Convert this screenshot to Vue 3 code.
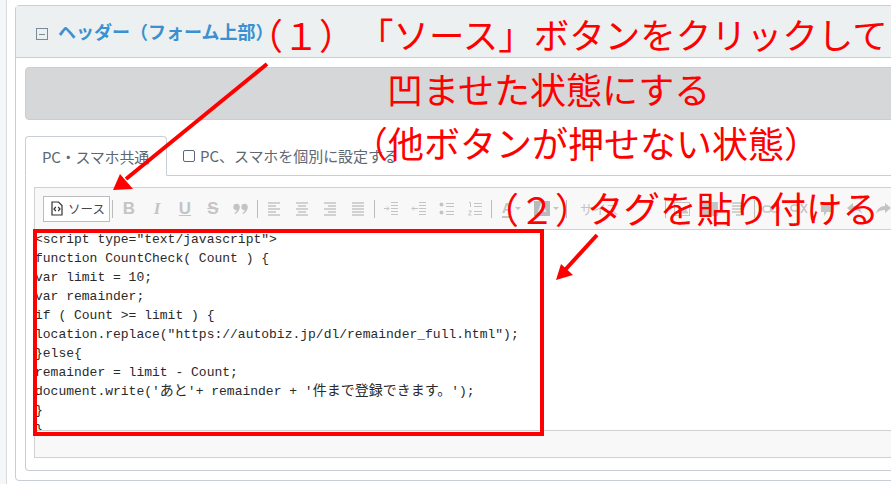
<script setup>
const codeLines = [
  '<script type="text/javascript">',
  'function CountCheck( Count ) {',
  'var limit = 10;',
  'var remainder;',
  'if ( Count >= limit ) {',
  'location.replace("https://autobiz.jp/dl/remainder_full.html");',
  '}else{',
  'remainder = limit - Count;',
  "document.write('あと'+ remainder + '件まで登録できます。');",
  '}',
  '}'
].map((l) => l.split(/([^\x00-\x7f]+)/).map((text) => ({ text, jp: /[^\x00-\x7f]/.test(text) })))
const lines = (a) => a.map(([x, y, w]) => `M${x} ${y}h${w}`).join('')
const alignLeft = lines([[2, 3, 12], [2, 6, 8], [2, 9, 12], [2, 12, 8], [2, 15, 12]])
const alignCenter = lines([[2, 3, 12], [4, 6, 8], [2, 9, 12], [4, 12, 8], [2, 15, 12]])
const alignRight = lines([[2, 3, 12], [6, 6, 8], [2, 9, 12], [6, 12, 8], [2, 15, 12]])
const justify = lines([[2, 3, 12], [2, 6, 12], [2, 9, 12], [2, 12, 12], [2, 15, 12]])
const groupA = [alignLeft, alignCenter, alignRight, justify]
</script>

<template>
  <div class="page">
    <div class="strip"></div>
    <div class="main">
      <section class="card">
        <header class="card-head">
          <span class="collapse"></span>
          <h2 class="title">ヘッダー（フォーム上部）</h2>
        </header>
        <div class="card-body">
          <div class="grey-bar"></div>
          <div class="tabs">
            <div class="tab active">PC・スマホ共通</div>
            <label class="tab plain"><span class="check"></span>PC、スマホを個別に設定する</label>
          </div>
          <div class="tab-pane">
            <div class="editor">
              <div class="toolbar">
                <button class="source">
                  <svg width="12" height="15" viewBox="0 0 12 15" fill="none" stroke="#333" stroke-width="1.2">
                    <path d="M1 1h6.500L11 4.500V14H1z" />
                    <path d="M4.800 6L3 8l1.800 2M7.200 6L9 8l-1.800 2" />
                  </svg>
                  <span>ソース</span>
                </button>
                <i class="sep"></i>
                <span class="btn txt b">B</span>
                <span class="btn txt it">I</span>
                <span class="btn txt u">U</span>
                <span class="btn txt s">S</span>
                <span class="btn">
                  <svg width="16" height="12" viewBox="0 0 16 12" fill="#c4c4c4">
                    <circle cx="3.500" cy="4" r="3.200" /><path d="M6.600 4c0 3.500-2 6-4.600 7l-.6-1c1.500-.8 2.700-2.500 2.700-4z" />
                    <circle cx="11.500" cy="4" r="3.200" /><path d="M14.600 4c0 3.500-2 6-4.600 7l-.6-1c1.500-.8 2.700-2.500 2.700-4z" />
                  </svg>
                </span>
                <i class="sep"></i>
                <span class="btn" v-for="(d, i) in groupA" :key="i">
                  <svg width="16" height="18" viewBox="0 0 16 18" fill="none" stroke="#c4c4c4" stroke-width="1.400"><path :d="d" /></svg>
                </span>
                <i class="sep"></i>
                <span class="btn">
                  <svg width="16" height="16" viewBox="0 0 16 16" fill="none" stroke="#c4c4c4"><path d="M8 1.500h7M8 4.500h7M8 7.500h7M8 10.500h7M8 13.500h7M1 7.500h5M4 5.500l2 2-2 2" /></svg>
                </span>
                <span class="btn">
                  <svg width="16" height="16" viewBox="0 0 16 16" fill="none" stroke="#c4c4c4"><path d="M8 1.500h7M8 4.500h7M8 7.500h7M8 10.500h7M8 13.500h7M1 7.500h6M3 5.500l-2 2 2 2" /></svg>
                </span>
                <span class="btn">
                  <svg width="16" height="16" viewBox="0 0 16 16" fill="#c4c4c4" stroke="#c4c4c4"><circle cx="2.500" cy="3.500" r="2" stroke="none" /><circle cx="2.500" cy="11.500" r="2" stroke="none" /><path d="M7 2.500h8M7 5.500h8M7 10.500h8M7 13.500h8" fill="none" /></svg>
                </span>
                <span class="btn">
                  <svg width="16" height="16" viewBox="0 0 16 16" fill="none" stroke="#c4c4c4"><path d="M7 2.500h8M7 5.500h8M7 10.500h8M7 13.500h8M2 1.500h1.500V6M1.500 10h3l-3 4h3" /></svg>
                </span>
                <i class="sep"></i>
                <span class="btn wide">
                  <span class="color-a">A</span><i class="caret"></i>
                </span>
                <span class="btn wide">
                  <span class="color-box">A</span><i class="caret"></i>
                </span>
                <i class="sep"></i>
                <span class="size">サイズ</span>
                <i class="sep"></i>
                <span class="btn">
                  <svg width="18" height="16" viewBox="0 0 18 16" fill="none" stroke="#c4c4c4"><rect x="1.500" y="1.500" width="15" height="13" /><path d="M3 12l4-5 3 3 2-2 3 4z" fill="#c4c4c4" /></svg>
                </span>
                <span class="btn">
                  <svg width="18" height="16" viewBox="0 0 18 16" fill="#c4c4c4"><rect x="1" y="1" width="16" height="14" /></svg>
                </span>
                <span class="btn">
                  <svg width="16" height="18" viewBox="0 0 16 18" fill="none" stroke="#c4c4c4" stroke-width="1.300"><path d="M2 3h12M2 6h12M2 9h12M2 12h12M6 15h8" /></svg>
                </span>
                <i class="sep"></i>
                <span class="btn">
                  <svg width="18" height="12" viewBox="0 0 18 12" fill="none" stroke="#c4c4c4" stroke-width="1.500"><rect x="1" y="3" width="8" height="6" rx="3" /><rect x="9" y="3" width="8" height="6" rx="3" /></svg>
                </span>
                <span class="btn">
                  <svg width="18" height="14" viewBox="0 0 18 14" fill="none" stroke="#c4c4c4" stroke-width="1.500"><rect x="1" y="3" width="8" height="6" rx="3" /><path d="M11 2l6 9M17 2l-6 9" /></svg>
                </span>
                <span class="btn">
                  <svg width="14" height="16" viewBox="0 0 14 16" fill="#c4c4c4"><path d="M1 1h12v10H7l-3 4v-4H1z" /></svg>
                </span>
                <span class="btn">
                  <svg width="18" height="14" viewBox="0 0 18 14" fill="#c4c4c4"><path d="M7 1L1 6l6 5V8c4 0 7 1 9 4-1-5-4-8-9-8z" /></svg>
                </span>
                <span class="btn">
                  <svg width="18" height="14" viewBox="0 0 18 14" fill="#c4c4c4"><path d="M11 1l6 5-6 5V8c-4 0-7 1-9 4 1-5 4-8 9-8z" /></svg>
                </span>
              </div>
              <div class="code">
                <div class="code-line" v-for="(l, i) in codeLines" :key="i"><span v-for="(p, j) in l" :key="j" :class="{ jp: p.jp }">{{ p.text }}</span></div>
              </div>
              <div class="editor-foot"></div>
            </div>
          </div>
        </div>
      </section>
    </div>

    <svg class="marks" width="891" height="484" viewBox="0 0 891 484" fill="none">
      <rect x="35" y="231" width="507" height="203" stroke="#f00" stroke-width="4" />
      <path d="M267 64L126 179" stroke="#f00" stroke-width="4" />
      <path d="M113 190l7-16 13 15z" fill="#f00" />
      <path d="M597 235l-32 35" stroke="#f00" stroke-width="4" />
      <path d="M556 280l5-16 12 11z" fill="#f00" />
    </svg>
    <div class="note n1">（１）</div>
    <div class="note n2">「ソース」ボタンをクリックして</div>
    <div class="note n3">凹ませた状態にする</div>
    <div class="note n4">（他ボタンが押せない状態）</div>
    <div class="note n5a">（２）</div>
    <div class="note n5b">タグを貼り付ける</div>
  </div>
</template>

<style scoped>
.page {
  position: relative;
  display: flex;
  width: 891px;
  height: 484px;
  overflow: hidden;
  background: #fff;
  font-family: "Noto Sans CJK JP", "Noto Sans", sans-serif;
}
.strip {
  flex: none;
  width: 6px;
  background: #f4f6f8;
  border-right: 1px solid #d5dbdf;
}
.main {
  flex: none;
  width: 1000px;
  padding: 5px 0 0 8px;
  box-sizing: border-box;
}
.card {
  height: 476px;
  box-sizing: border-box;
  border: 1px solid #c8ced3;
  border-radius: 4px;
  display: flex;
  flex-direction: column;
}
.card-head {
  flex: none;
  height: 52px;
  box-sizing: border-box;
  display: flex;
  align-items: center;
  gap: 10px;
  padding-left: 20px;
  background: #ecf0f1;
  border-bottom: 1px solid #c8ced3;
}
.collapse {
  position: relative;
  width: 12px;
  height: 12px;
  margin-top: 4px;
  box-sizing: border-box;
  border: 1px solid #7b8a99;
}
.collapse::after {
  content: "";
  position: absolute;
  left: 2px;
  top: 5px;
  width: 6px;
  height: 1px;
  background: #7b8a99;
}
.title {
  margin: 0 0 2px;
  font-size: 18px;
  font-weight: 700;
  color: #3a90d0;
  white-space: nowrap;
}
.card-body {
  flex: 1;
  padding: 9px 0 9px 9px;
  display: flex;
  flex-direction: column;
  min-height: 0;
}
.grey-bar {
  flex: none;
  height: 53px;
  box-sizing: border-box;
  background: #d6d7d9;
  border: 1px solid #c8ced3;
  border-radius: 4px;
  margin-bottom: 16px;
}
.tabs {
  flex: none;
  display: flex;
  height: 40px;
  box-sizing: border-box;
  border-bottom: 1px solid #c8ced3;
  font-size: 15px;
  color: #5c6873;
}
.tab {
  display: flex;
  align-items: center;
  height: 40px;
  box-sizing: border-box;
  white-space: nowrap;
  letter-spacing: -0.2px;
}
.tab.active {
  width: 142px;
  padding-left: 16px;
  background: #fff;
  border: 1px solid #c8ced3;
  border-bottom-color: #fff;
  border-radius: 4px 4px 0 0;
}
.tab.plain {
  padding-left: 16px;
  height: 39px;
  letter-spacing: -0.05px;
}
.check {
  width: 12px;
  height: 12px;
  box-sizing: border-box;
  border: 1px solid #5c6873;
  border-radius: 2px;
  margin-right: 5px;
}
.tab-pane {
  flex: 1;
  min-height: 0;
  padding: 11px 0 12px 8px;
  border-left: 1px solid #c8ced3;
  border-bottom: 1px solid #c8ced3;
  border-radius: 0 0 0 4px;
}
.editor {
  height: 100%;
  box-sizing: border-box;
  border: 1px solid #d1d1d1;
  background: #f8f8f8;
  display: flex;
  flex-direction: column;
}
.toolbar {
  flex: none;
  height: 42px;
  box-sizing: border-box;
  padding-left: 8px;
  border-bottom: 1px solid #d1d1d1;
  display: flex;
  align-items: center;
}
.source {
  height: 26px;
  width: 67px;
  box-sizing: border-box;
  padding: 0 0 0 7px;
  background: #fff;
  border: 1px solid #bcbcbc;
  display: flex;
  align-items: center;
  gap: 5px;
  font: 12.5px "Noto Sans CJK JP", sans-serif;
  color: #474747;
}
.sep {
  flex: none;
  width: 1px;
  height: 18px;
  margin: 0 2px;
  background: #bcbcbc;
}
.btn {
  flex: none;
  width: 28px;
  height: 24px;
  display: flex;
  align-items: center;
  justify-content: center;
  color: #c4c4c4;
}
.btn.wide {
  width: 35px;
  gap: 3px;
}
.txt {
  font-family: "Liberation Sans", sans-serif;
  font-size: 17px;
  font-weight: 700;
}
.it { font-family: "Liberation Serif", serif; font-style: italic; }
.u { text-decoration: underline; }
.s { text-decoration: line-through; }
.color-a {
  font: 700 14px/16px "Liberation Sans", sans-serif;
  border-bottom: 2px solid #c4c4c4;
}
.color-box {
  font: 700 12px/15px "Liberation Sans", sans-serif;
  background: #b9b9b9;
  color: #f0f0f0;
  width: 16px;
  text-align: center;
}
.caret {
  width: 0;
  height: 0;
  border: 3px solid transparent;
  border-top-color: #c4c4c4;
  margin-top: 3px;
}
.size {
  flex: none;
  width: 94px;
  padding-left: 11px;
  box-sizing: border-box;
  font-size: 13px;
  color: #c4c4c4;
}
.code {
  flex: none;
  height: 201px;
  overflow: hidden;
  box-sizing: border-box;
  background: #fff;
  border-bottom: 1px solid #d1d1d1;
  font: 13px/19px "Liberation Mono", "Noto Sans CJK JP", monospace;
  color: #2a2a2a;
}
.code-line {
  height: 19px;
  white-space: pre;
}
.jp {
  font-family: "Noto Sans CJK JP", sans-serif;
  font-size: 14px;
  line-height: 0;
}
.editor-foot {
  flex: 1;
  background: #f8f8f8;
}
.marks {
  position: absolute;
  left: 0;
  top: 0;
  pointer-events: none;
}
.note {
  position: absolute;
  font-size: 35.5px;
  line-height: 44px;
  color: #f00;
  white-space: nowrap;
}
.n1 { left: 247px; top: 12px; font-size: 36px; }
.n2 { left: 358px; top: 12px; }
.n3 { left: 387px; top: 66px; font-size: 36px; }
.n4 { left: 352px; top: 120px; font-size: 36px; }
.n5a { left: 483px; top: 186px; font-size: 36px; }
.n5b { left: 587px; top: 186px; font-size: 36.5px; }
</style>
